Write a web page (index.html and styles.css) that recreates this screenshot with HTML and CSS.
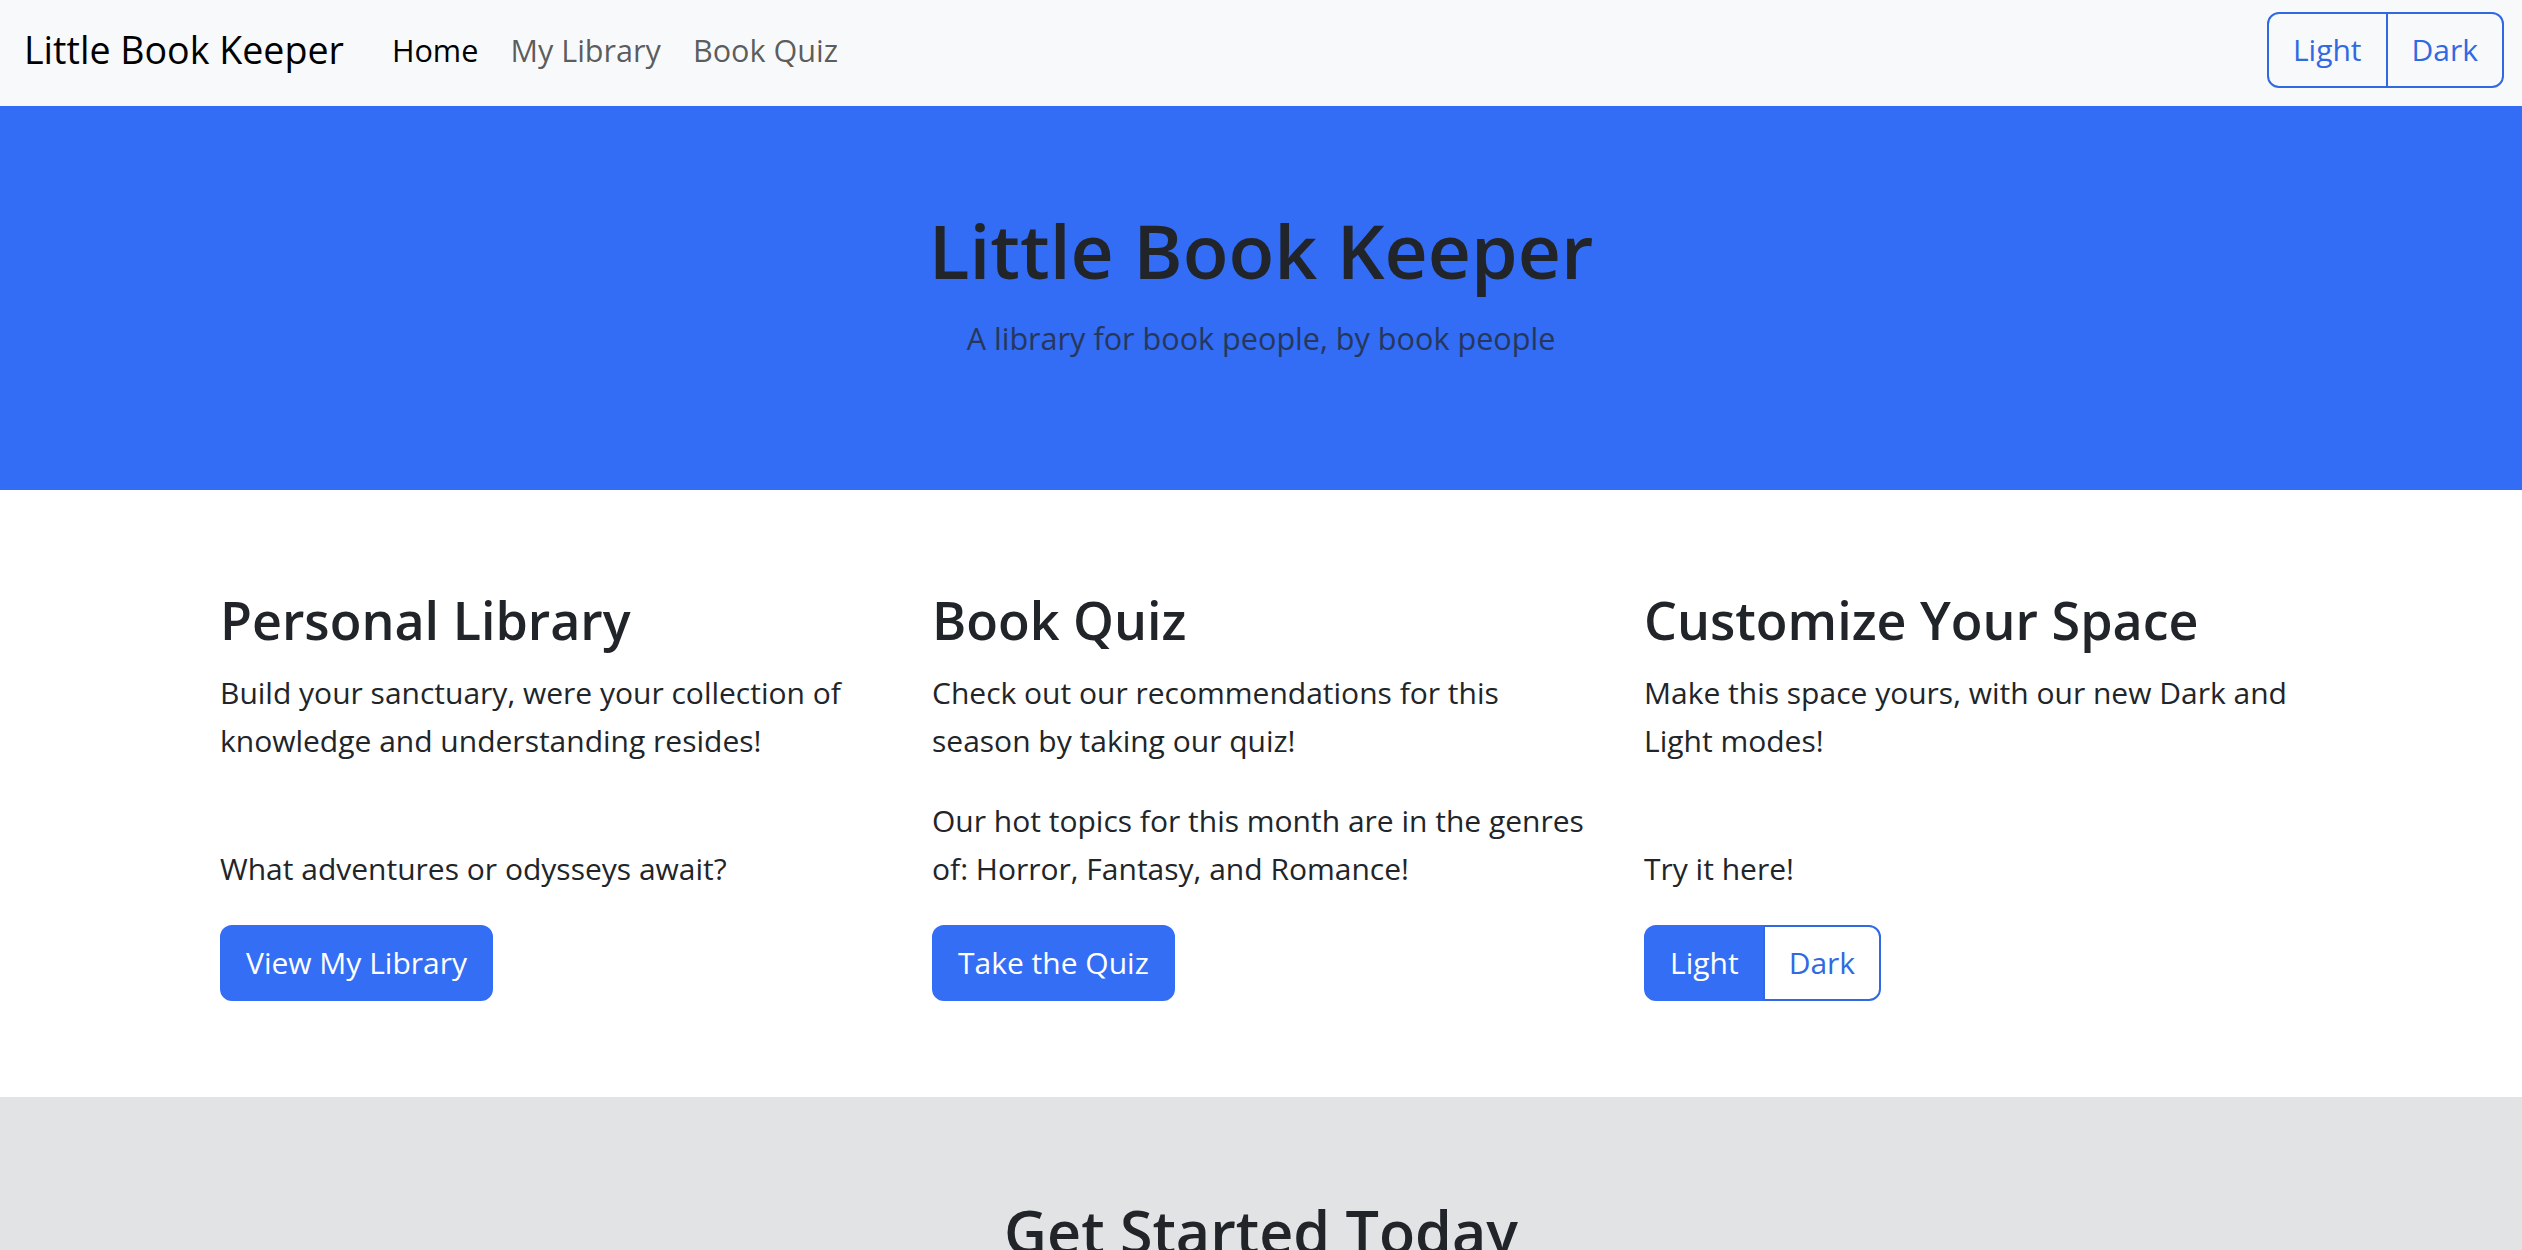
FILE: index.html
```html
<!DOCTYPE html>
<html lang="en">
<head>
<meta charset="utf-8">
<title>Little Book Keeper</title>
<link rel="stylesheet" href="styles.css">
</head>
<body>
<nav class="navbar">
  <a class="brand" href="#">Little Book Keeper</a>
  <ul class="nav">
    <li><a class="nav-link active" href="#">Home</a></li>
    <li><a class="nav-link" href="#">My Library</a></li>
    <li><a class="nav-link" href="#">Book Quiz</a></li>
  </ul>
  <div class="btn-group nav-toggle">
    <button class="btn btn-outline">Light</button>
    <button class="btn btn-outline">Dark</button>
  </div>
</nav>

<header class="hero">
  <h1 class="hero-title">Little Book Keeper</h1>
  <p class="hero-sub">A library for book people, by book people</p>
</header>

<section class="features">
  <div class="feature">
    <h3 class="feature-title">Personal Library</h3>
    <p>Build your sanctuary, were your collection of knowledge and understanding resides!</p>
    <p><br>What adventures or odysseys await?</p>
    <a class="btn btn-primary" href="#">View My Library</a>
  </div>
  <div class="feature">
    <h3 class="feature-title">Book Quiz</h3>
    <p>Check out our recommendations for this season by taking our quiz!</p>
    <p>Our hot topics for this month are in the genres of: Horror, Fantasy, and Romance!</p>
    <a class="btn btn-primary" href="#">Take the Quiz</a>
  </div>
  <div class="feature">
    <h3 class="feature-title">Customize Your Space</h3>
    <p>Make this space yours, with our new Dark and Light modes!</p>
    <p><br>Try it here!</p>
    <div class="btn-group">
      <button class="btn btn-outline is-active">Light</button>
      <button class="btn btn-outline">Dark</button>
    </div>
  </div>
</section>

<section class="cta">
  <h2 class="cta-title">Get Started Today</h2>
  <p class="cta-text">Sign up and start building your personal library.</p>
</section>
</body>
</html>
```

FILE: styles.css
```css
* { box-sizing: border-box; }

html, body {
  margin: 0;
  padding: 0;
}

body {
  font-family: "Open Sans", "Noto Sans", "Liberation Sans", sans-serif;
  font-size: 30px;
  line-height: 48px;
  color: #212529;
  background: #ffffff;
}

h1, h2, h3, p { margin: 0; }

/* ---------- navbar ---------- */
.navbar {
  height: 106px;
  padding: 10px 18px 16px 24px;
  background: #f8f9fa;
  display: flex;
  align-items: center;
}

.brand {
  font-size: 37.6px;
  line-height: 60px;
  padding: 10px 0;
  margin-right: 32px;
  color: #000;
  text-decoration: none;
}

.nav {
  list-style: none;
  margin: 0;
  padding: 0;
  display: flex;
}

.nav-link {
  display: block;
  padding: 16px 16px;
  font-size: 30.6px;
  line-height: 48px;
  color: rgba(0, 0, 0, 0.65);
  text-decoration: none;
}

.nav-link.active { color: #000; }

.nav-toggle {
  margin-left: auto;
}

/* ---------- buttons ---------- */
.btn {
  display: inline-block;
  font-family: inherit;
  font-size: 30px;
  line-height: 48px;
  padding: 12px 24px;
  border: 2px solid transparent;
  border-radius: 12px;
  text-decoration: none;
  cursor: pointer;
  background: transparent;
}

.btn-primary {
  background: #346ef5;
  border-color: #346ef5;
  color: #ffffff;
}

.btn-outline {
  color: #3169e2;
  border-color: #3169e2;
  background: transparent;
}

.btn-outline.is-active {
  background: #346ef5;
  border-color: #346ef5;
  color: #ffffff;
}

.btn-group {
  display: inline-flex;
}

.btn-group .btn:first-child {
  border-top-right-radius: 0;
  border-bottom-right-radius: 0;
}

.btn-group .btn:last-child {
  margin-left: -2px;
  border-top-left-radius: 0;
  border-bottom-left-radius: 0;
}

.features .btn-group .btn:last-child {
  background: #ffffff;
}

/* ---------- hero ---------- */
.hero {
  background: #336cf5;
  padding: 96px 0;
  text-align: center;
}

.hero-title {
  font-size: 75px;
  line-height: 96px;
  font-weight: 600;
  color: #212529;
  margin-bottom: 16px;
}

.hero-sub {
  font-size: 30.6px;
  line-height: 48px;
  color: #26375c;
  margin-bottom: 32px;
}

/* ---------- features ---------- */
.features {
  width: 2280px;
  margin: 0 auto;
  padding: 96px 93px 96px 99px;
  display: grid;
  grid-template-columns: repeat(3, 1fr);
  column-gap: 48px;
}

.feature-title {
  font-size: 52px;
  line-height: 67px;
  font-weight: 600;
  margin-bottom: 16px;
}

.feature p {
  margin-bottom: 32px;
}

/* ---------- call to action ---------- */
.cta {
  background: #e2e3e5;
  padding: 96px 24px;
  text-align: center;
}

.cta-title {
  font-size: 59.2px;
  line-height: 77px;
  font-weight: 600;
  margin-bottom: 16px;
}

.cta-text {
  margin-bottom: 32px;
}
```
